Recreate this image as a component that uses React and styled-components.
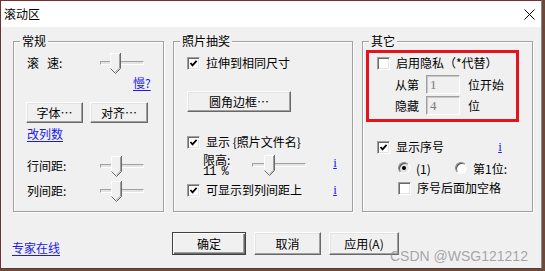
import React from 'react';
import styled, { createGlobalStyle, css } from 'styled-components';

const GlobalStyle = createGlobalStyle`
  html, body {
    margin: 0;
    padding: 0;
  }
  body {
    width: 545px;
    height: 271px;
    overflow: hidden;
    background: #6b4a3a;
    font-family: "Noto Sans CJK SC", "Liberation Sans", sans-serif;
    font-size: 12px;
    color: #000;
  }
`

const Window = styled.div`
  position: relative;
  width: 542px;
  height: 269px;
  box-sizing: border-box;
  border: 1px solid #8c8c8c;
  border-top-color: #7a2e2e;
  border-left-color: #6e3030;
  border-bottom-color: #5a3a2a;
  background: #f0f0f0;
  display: flex;
  flex-direction: column;
  overflow: hidden;
`

const TitleBar = styled.div`
  height: 26px;
  flex: none;
  background: #fff;
  display: flex;
  align-items: center;
  justify-content: space-between;
  padding: 0 6px 0 3px;
  font-size: 12px;
  line-height: 26px;
`

const Body = styled.div`
  display: flex;
  flex-direction: column;
  padding: 7px 0 0 12px;
`

const Groups = styled.div`
  display: flex;
  gap: 9px;
`

const Group = styled.fieldset`
  margin: 0;
  padding: 0;
  min-width: 0;
  width: ${p => p.$w}px;
  height: 178px;
  box-sizing: border-box;
  border: 1px solid #a0a0a0;
  box-shadow: inset 1px 1px 0 #fff, 1px 1px 0 #fff;
  display: flex;
  flex-direction: column;
`

const Legend = styled.legend`
  margin-left: 6px;
  padding: 0 2px;
  height: 14px;
  line-height: 14px;
  background: #f0f0f0;
`

const Row = styled.div`
  display: flex;
  align-items: ${p => p.$top ? 'flex-start' : 'center'};
  flex: none;
  height: ${p => p.$h || 20}px;
  margin-top: ${p => p.$mt || 0}px;
  padding-left: ${p => p.$pl || 0}px;
  padding-right: ${p => p.$pr || 0}px;
  gap: ${p => p.$gap || 0}px;
  white-space: nowrap;
`

const Label = styled.span`
  display: inline-block;
  width: ${p => p.$w ? `${p.$w}px` : 'auto'};
  margin-left: ${p => p.$ml || 0}px;
  line-height: 20px;
  flex: none;
`

const Gap = styled.span`
  margin-right: 8px;
`

const Link = styled.a`
  color: #1a1aee;
  text-decoration: underline;
  text-underline-offset: 2px;
  line-height: 18px;
  cursor: pointer;
  margin-left: ${p => p.$ml || 0}px;
`

const ILink = styled.a`
  display: inline-block;
  width: 6px;
  text-align: center;
  color: #1a1aee;
  font-family: "Liberation Serif", serif;
  font-size: 13px;
  line-height: 20px;
  text-decoration: underline;
  margin-left: auto;
  margin-top: ${p => p.$mt || 0}px;
`

const SliderBox = styled.div`
  position: relative;
  flex: none;
  width: ${p => p.$w}px;
  height: 21px;
  margin-top: ${p => p.$mt || 0}px;
`

const Track = styled.div`
  position: absolute;
  left: 0;
  right: 0;
  top: 8px;
  height: 4px;
  box-sizing: border-box;
  border: 1px solid;
  border-color: #a0a0a0 #fff #fff #a0a0a0;
  background: #e3e3e3;
`

const Thumb = styled.svg`
  position: absolute;
  top: 0;
  left: ${p => p.$x}px;
`

const Slider = ({ w, x, mt }) => (
  <SliderBox $w={w} $mt={mt}>
    <Track />
    <Thumb $x={x} width="11" height="21" viewBox="0 0 11 21">
      <path d="M0.5 0.5 H10.5 V15.5 L5.5 20.5 L0.5 15.5 Z" fill="#f0f0f0" />
      <path d="M0.5 15.5 V0.5 H10" stroke="#fff" fill="none" />
      <path d="M10.5 0 V15.5 L5.5 20.5 L0.5 15.5" stroke="#696969" fill="none" />
      <path d="M9.5 1 V15 L5.5 19" stroke="#a0a0a0" fill="none" />
    </Thumb>
  </SliderBox>
)

const Box = styled.span`
  width: 13px;
  height: 13px;
  box-sizing: border-box;
  flex: none;
  background: #fff;
  border: 1px solid;
  border-color: #a0a0a0 #fff #fff #a0a0a0;
  box-shadow: inset 1px 1px 0 #696969, inset -1px -1px 0 #e3e3e3;
  display: flex;
  align-items: center;
  justify-content: center;
`

const Check = ({ on }) => (
  <Box>
    {on && (
      <svg width="9" height="9" viewBox="0 0 9 9">
        <path d="M1.5 4 L3.5 6.3 L7.6 1.8" stroke="#000" strokeWidth="1.8" fill="none" />
      </svg>
    )}
  </Box>
)

const CheckRow = styled.label`
  display: flex;
  align-items: center;
  gap: 6px;
  line-height: 20px;
`

const RadioDot = styled.span`
  width: 12px;
  height: 12px;
  box-sizing: border-box;
  flex: none;
  border-radius: 50%;
  border: 1px solid;
  border-color: #8a8a8a #fff #fff #8a8a8a;
  background: ${p => p.$on ? '#e4e4e4' : '#fff'};
  box-shadow: inset 1px 1px 0 #505050;
  display: flex;
  align-items: center;
  justify-content: center;
  &::after {
    content: '';
    width: 4px;
    height: 4px;
    border-radius: 50%;
    background: ${p => p.$on ? '#000' : 'transparent'};
  }
`

const RadioItem = styled.label`
  display: flex;
  align-items: center;
  gap: 6px;
  width: ${p => p.$w ? `${p.$w}px` : 'auto'};
`

const Button = styled.button`
  font: inherit;
  font-size: 12px;
  color: #000;
  width: ${p => p.$w}px;
  height: ${p => p.$h || 21}px;
  padding: 0;
  flex: none;
  background: #f0f0f0;
  border: 1px solid;
  border-color: #fff #696969 #696969 #fff;
  box-shadow: inset -1px -1px 0 #a0a0a0, inset 1px 1px 0 #e3e3e3;
  ${p => p.$default && css`
    border-color: #404040;
    box-shadow: inset 1px 1px 0 #fff, inset -1px -1px 0 #696969, inset -2px -2px 0 #a0a0a0;
  `}
`

const Highlight = styled.div`
  margin: 2px 0 0 3px;
  width: 153px;
  height: 72px;
  box-sizing: border-box;
  border: 3px solid #e3141e;
  display: flex;
  flex-direction: column;
`

const Field = styled.input`
  width: 34px;
  height: 19px;
  box-sizing: border-box;
  flex: none;
  margin: 0;
  padding: 0 0 0 3px;
  border: 1px solid;
  border-color: #a0a0a0 #fff #fff #a0a0a0;
  box-shadow: inset 1px 1px 0 #c8c8c8;
  background: #f0f0f0;
  font-family: "Liberation Serif", serif;
  font-size: 13px;
  color: #7a7a7a;
  -webkit-text-fill-color: #7a7a7a;
`

const LimitLabels = styled.div`
  width: 49px;
  flex: none;
  margin-top: 2px;
  line-height: 12px;
`

const Percent = styled.div`
  font-family: "Liberation Mono", monospace;
  font-size: 12px;
  letter-spacing: -1px;
`

const Footer = styled.div`
  display: flex;
  align-items: flex-start;
  margin-top: 20px;
`

const FooterLink = styled.div`
  width: 160px;
  flex: none;
  padding-top: 7px;
  margin-left: -1px;
`

const Buttons = styled.div`
  display: flex;
  gap: 8px;
`

const Watermark = styled.div`
  position: absolute;
  left: 389px;
  top: 246px;
  font-family: "Liberation Sans", sans-serif;
  font-size: 14px;
  line-height: 18px;
  color: rgba(140, 140, 140, 0.75);
  pointer-events: none;
`

export default function App() {
  return (
    <>
      <GlobalStyle />
      <Window>
        <TitleBar>
          <span>滚动区</span>
          <svg width="11" height="11" viewBox="0 0 11 11">
            <path d="M0.5 0.5 L10.5 10.5 M10.5 0.5 L0.5 10.5" stroke="#000" strokeWidth="1" />
          </svg>
        </TitleBar>
        <Body>
          <Groups>
            <Group $w={151}>
              <Legend>常规</Legend>
              <Row $top $h={21} $mt={5} $pl={13}>
                <Label $w={73}><Gap>滚</Gap>速:</Label>
                <Slider w={44} x={10} />
              </Row>
              <Row $h={18}>
                <Link $ml={119}>慢?</Link>
              </Row>
              <Row $h={21} $mt={10} $pl={12} $gap={7}>
                <Button $w={57}>字体⋯</Button>
                <Button $w={58}>对齐⋯</Button>
              </Row>
              <Row $h={18} $mt={2} $pl={13}>
                <Link>改列数</Link>
              </Row>
              <Row $top $h={21} $mt={13} $pl={13}>
                <Label $w={73}>行间距:</Label>
                <Slider w={44} x={11} />
              </Row>
              <Row $top $h={21} $mt={4} $pl={13}>
                <Label $w={73}>列间距:</Label>
                <Slider w={44} x={11} />
              </Row>
            </Group>

            <Group $w={180}>
              <Legend>照片抽奖</Legend>
              <Row $mt={5} $pl={13}>
                <CheckRow><Check on />拉伸到相同尺寸</CheckRow>
              </Row>
              <Row $h={21} $mt={18} $pl={13}>
                <Button $w={104}>圆角边框⋯</Button>
              </Row>
              <Row $mt={20} $pl={13}>
                <CheckRow><Check on />显示 {'{'}照片文件名{'}'}</CheckRow>
              </Row>
              <Row $top $h={26} $pl={29} $pr={14}>
                <LimitLabels>
                  <div>限高:</div>
                  <Percent>11 %</Percent>
                </LimitLabels>
                <Slider w={54} x={12} mt={3} />
                <ILink $mt={1}>i</ILink>
              </Row>
              <Row $mt={2} $pl={13} $pr={14}>
                <CheckRow><Check on />可显示到列间距上</CheckRow>
                <ILink>i</ILink>
              </Row>
            </Group>

            <Group $w={171}>
              <Legend>其它</Legend>
              <Highlight>
                <Row $pl={8}>
                  <CheckRow><Check />启用隐私（*代替）</CheckRow>
                </Row>
                <Row $h={19} $mt={2} $pl={26} $gap={7}>
                  <Label>从第</Label>
                  <Field disabled defaultValue="1" />
                  <Label $ml={1}>位开始</Label>
                </Row>
                <Row $h={19} $mt={2} $pl={26} $gap={7}>
                  <Label>隐藏</Label>
                  <Field disabled defaultValue="4" />
                  <Label $ml={1}>位</Label>
                </Row>
              </Highlight>
              <Row $mt={15} $pl={14} $pr={29}>
                <CheckRow><Check on />显示序号</CheckRow>
                <ILink>i</ILink>
              </Row>
              <Row $mt={1} $pl={35}>
                <RadioItem $w={57}><RadioDot $on />(1)</RadioItem>
                <RadioItem><RadioDot />第1位:</RadioItem>
              </Row>
              <Row $pl={35}>
                <CheckRow><Check />序号后面加空格</CheckRow>
              </Row>
            </Group>
          </Groups>

          <Footer>
            <FooterLink>
              <Link>专家在线</Link>
            </FooterLink>
            <Buttons>
              <Button $w={74} $h={23} $default>确定</Button>
              <Button $w={67} $h={23}>取消</Button>
              <Button $w={70} $h={23}>应用(A)</Button>
            </Buttons>
          </Footer>
        </Body>
        <Watermark>CSDN @WSG121212</Watermark>
      </Window>
    </>
  )
}
